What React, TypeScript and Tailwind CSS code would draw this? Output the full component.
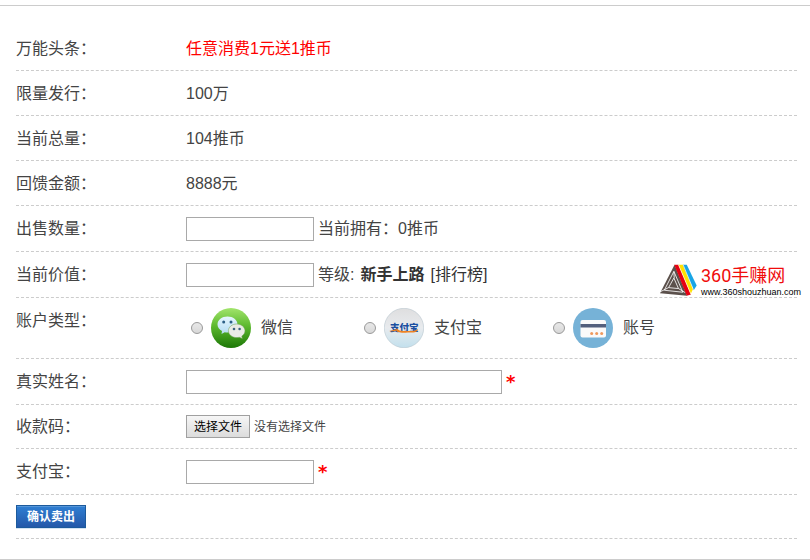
import React, { useRef, useState } from 'react';

interface RowProps {
  label: string;
  htmlFor?: string;
  className?: string;
  labelClassName?: string;
  children: React.ReactNode;
}

const Row: React.FC<RowProps> = ({ label, htmlFor, className = 'min-h-[45px] pt-0.5', labelClassName = '', children }) => (
  <div className={`relative flex items-center border-b border-dashed border-[#ccc] ${className}`}>
    {htmlFor ? (
      <label htmlFor={htmlFor} className={`w-[170px] shrink-0 ${labelClassName}`}>{label}</label>
    ) : (
      <span className={`w-[170px] shrink-0 ${labelClassName}`}>{label}</span>
    )}
    <div className="flex flex-1 items-center">{children}</div>
  </div>
);

const WechatIcon = () => (
  <svg viewBox="0 0 40 40" className="size-10" aria-hidden="true">
    <defs>
      <linearGradient id="wechat" x1="0" y1="0" x2="0" y2="1">
        <stop offset="0" stopColor="#a2e56c" />
        <stop offset="0.45" stopColor="#5db92f" />
        <stop offset="1" stopColor="#1c7706" />
      </linearGradient>
      <linearGradient id="bubble" x1="0" y1="0" x2="0" y2="1">
        <stop offset="0" stopColor="#e6f6fd" />
        <stop offset="1" stopColor="#b5dcf3" />
      </linearGradient>
    </defs>
    <circle cx="20" cy="20" r="20" fill="url(#wechat)" />
    <path d="M16.5 8.5c5.6 0 10 3.5 10 8s-4.4 8-10 8c-.9 0-1.900-.1-2.800-.3L10.500 26l.5-3c-2.700-1.500-4.500-3.800-4.500-6.500 0-4.500 4.400-8 10-8z" fill="url(#bubble)" />
    <circle cx="12.700" cy="14" r="1.500" fill="#2c5f86" />
    <circle cx="20" cy="14" r="1.500" fill="#2c5f86" />
    <path d="M25.700 16c4.600 0 8.300 3 8.300 6.800 0 2.200-1.300 4-3.200 5.300l.5 2.400-3-1.200c-.8.200-1.700.3-2.600.3-4.600 0-8.300-3-8.300-6.800s3.700-6.800 8.300-6.800z" fill="#e9ebe5" stroke="#6b9f50" strokeWidth="0.5" />
    <circle cx="23" cy="21" r="1.300" fill="#3c6480" />
    <circle cx="28.600" cy="21" r="1.300" fill="#3c6480" />
  </svg>
);

const AlipayIcon = () => (
  <svg viewBox="0 0 40 40" className="size-10" aria-hidden="true">
    <defs>
      <linearGradient id="alipay" x1="0" y1="0" x2="0" y2="1">
        <stop offset="0" stopColor="#dededf" />
        <stop offset="0.5" stopColor="#e8ebee" />
        <stop offset="1" stopColor="#c2e0ed" />
      </linearGradient>
    </defs>
    <circle cx="20" cy="20" r="19.700" fill="url(#alipay)" stroke="#b9c6ce" strokeWidth="0.6" />
    <text x="6" y="22.500" fontSize="9.500" fontWeight="900" fill="#1a4fa0" fontFamily="'Noto Sans CJK SC', sans-serif">支付宝</text>
    <path d="M5 23c4-.8 7-1.600 9-2.500-1 2 4 2.600 9 2.400 4.500 0 9 .2 11-2 .3 2.500-3 3.600-8 3.700-7 .2-13 .2-13.500-2.200-2 .9-4.500 1.200-7.500.6z" fill="#ee8222" />
  </svg>
);

const CardIcon = () => (
  <svg viewBox="0 0 40 40" className="size-10" aria-hidden="true">
    <circle cx="20" cy="20" r="20" fill="#76b2d7" />
    <rect x="7.500" y="12" width="25.500" height="17.500" rx="2" fill="#fafafa" />
    <rect x="7.500" y="16" width="25.500" height="3.500" fill="#535f7c" />
    <circle cx="18.700" cy="25.500" r="1.500" fill="#ef995e" />
    <circle cx="23.700" cy="25.500" r="1.500" fill="#ef995e" />
    <circle cx="28.700" cy="25.500" r="1.500" fill="#ef995e" />
  </svg>
);

const SiteLogo = () => (
  <div className="pointer-events-none absolute -right-1 top-3 flex items-start">
    <svg viewBox="24 40 112 96" className="h-8 w-[37px]" aria-hidden="true">
      <path d="M68 42 24 128l82 8z" fill="#5b504b" />
      <path d="M66 62 37 119l56 6zM66 82 50 111l30 3zM66 62l1 20M24 124l26-13M80 114l20 12" fill="none" stroke="#fff" strokeWidth="2.5" />
      <path d="M67 42h13l38 90-13 4z" fill="#e60012" />
      <path d="M80 42h15l29 73-7 15z" fill="#ffe100" />
      <path d="M93 42h12l30 63-9 14z" fill="#18a5e6" />
      <path d="M80 42l38 90M94 42l31 75" stroke="#fff" strokeWidth="2" />
    </svg>
    <div className="ml-1 flex flex-col">
      <span className="font-['Roboto','Noto_Sans_CJK_SC',sans-serif] text-[18px] leading-6 text-[#f00c0c]">360手赚网</span>
      <span className="font-['Liberation_Sans',sans-serif] text-[9px] leading-[9px] text-black">www.360shouzhuan.com</span>
    </div>
  </div>
);

const accounts = [
  { id: 'wechat', name: '微信', icon: <WechatIcon /> },
  { id: 'alipay', name: '支付宝', icon: <AlipayIcon /> },
  { id: 'card', name: '账号', icon: <CardIcon /> },
];

const inputClass = 'h-6 border border-[#a9a9a9] bg-white px-1 outline-none';

const Required = () => <span className="ml-1 font-['DejaVu_Sans',sans-serif] text-lg leading-6 font-bold text-[#f00]">*</span>;

const App: React.FC = () => {
  const [account, setAccount] = useState('');
  const [fileName, setFileName] = useState('');
  const fileRef = useRef<HTMLInputElement>(null);

  return (
    <div lang="zh-CN" className="bg-white pt-[5px] font-['Liberation_Sans','Noto_Sans_CJK_SC',sans-serif] text-base leading-6 text-[#444]">
      <form className="border-y border-[#ccc] py-5 pl-4 pr-[13px]" onSubmit={(e) => e.preventDefault()}>
        <Row label="万能头条："><span className="text-[#f00]">任意消费1元送1推币</span></Row>
        <Row label="限量发行：">100万</Row>
        <Row label="当前总量：">104推币</Row>
        <Row label="回馈金额：">8888元</Row>
        <Row label="出售数量：" htmlFor="amount" className="min-h-[46px]">
          <input id="amount" type="text" className={`w-32 ${inputClass}`} />
          <span className="ml-1">当前拥有：0推币</span>
        </Row>
        <Row label="当前价值：" htmlFor="value" className="min-h-[46px]">
          <input id="value" type="text" className={`w-32 ${inputClass}`} />
          <span className="ml-1">等级:</span>
          <b className="ml-[6px] text-[#333]">新手上路</b>
          <a href="#rank" className="ml-[6px] text-[#333]">[排行榜]</a>
          <SiteLogo />
        </Row>
        <Row label="账户类型：" className="min-h-[61px]" labelClassName="self-start pt-[11px]">
          <div className="flex gap-[71px] pl-[5px]">
            {accounts.map((item) => (
              <label key={item.id} className="flex items-center">
                <input
                  type="radio"
                  name="account"
                  value={item.id}
                  checked={account === item.id}
                  onChange={() => setAccount(item.id)}
                  className="mr-2 size-3 appearance-none rounded-full border border-[#999] bg-linear-to-b from-[#e8e8e8] to-[#d8d8d8] checked:bg-[#555]"
                />
                {item.icon}
                <span className="ml-[10px]">{item.name}</span>
              </label>
            ))}
          </div>
        </Row>
        <Row label="真实姓名：" htmlFor="realname" className="min-h-[46px]">
          <input id="realname" type="text" className={`w-[316px] ${inputClass}`} />
          <Required />
        </Row>
        <Row label="收款码：" htmlFor="qrcode" className="min-h-11">
          <input
            ref={fileRef}
            id="qrcode"
            type="file"
            className="hidden"
            onChange={(e) => setFileName(e.target.files?.[0]?.name ?? '')}
          />
          <button
            type="button"
            onClick={() => fileRef.current?.click()}
            className="h-[23px] w-16 border border-[#a0a0a0] bg-linear-to-b from-[#f6f6f6] to-[#dcdcdc] text-xs text-black"
          >
            选择文件
          </button>
          <span className="ml-1 text-xs">{fileName || '没有选择文件'}</span>
        </Row>
        <Row label="支付宝：" htmlFor="alipay-account" className="min-h-[46px]">
          <input id="alipay-account" type="text" className={`w-32 ${inputClass}`} />
          <Required />
        </Row>
        <div className="flex min-h-11 items-center border-b border-dashed border-[#ccc]">
          <button
            type="submit"
            className="h-[23px] w-[70px] border border-[#1c5a9c] bg-linear-to-b from-[#2f7fd3] to-[#2458a9] text-xs font-bold text-white shadow-[inset_0_1px_0_#5596d9,0_1px_0_#d5e3f2]"
          >
            确认卖出
          </button>
        </div>
      </form>
    </div>
  );
};

export default App;
